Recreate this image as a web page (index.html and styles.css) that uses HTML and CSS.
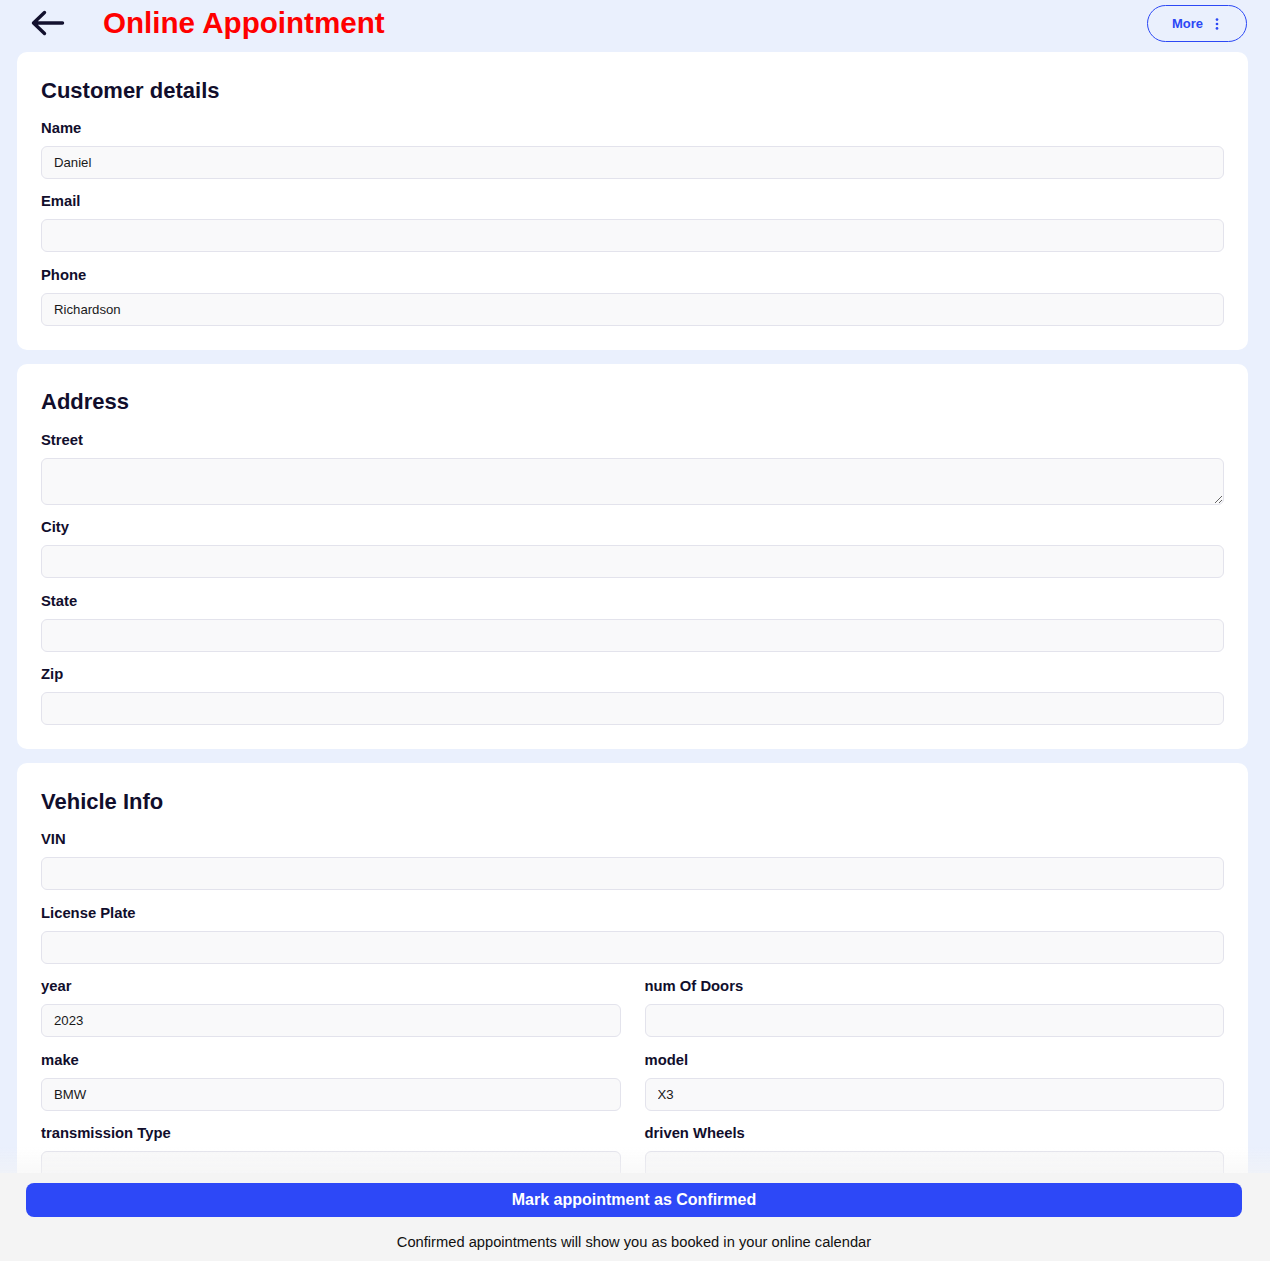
FILE: index.html
```html
<!DOCTYPE html>
<html lang="en">
<head>
<meta charset="utf-8">
<title>Online Appointment</title>
<link rel="stylesheet" href="styles.css">
</head>
<body>
<div class="page">
  <header class="topbar">
    <button class="back" aria-label="Back">
      <svg width="34" height="26" viewBox="0 0 34 26"><path d="M2.5 13 H31.5 M13.5 2.5 L2.5 13 L13.5 23.5" fill="none" stroke="#13112e" stroke-width="3.4" stroke-linecap="round" stroke-linejoin="round"/></svg>
    </button>
    <h1 class="title">Online Appointment</h1>
    <button class="more">More
      <svg width="4" height="12" viewBox="0 0 4 12"><circle cx="2" cy="1.6" r="1.35" fill="#2c48f5"/><circle cx="2" cy="6" r="1.35" fill="#2c48f5"/><circle cx="2" cy="10.4" r="1.35" fill="#2c48f5"/></svg>
    </button>
  </header>

  <main class="content">
    <section class="card">
      <h2 class="card-title">Customer details</h2>
      <div class="field"><label class="label">Name</label><input class="input" value="Daniel"></div>
      <div class="field"><label class="label">Email</label><input class="input" value=""></div>
      <div class="field"><label class="label">Phone</label><input class="input" value="Richardson"></div>
    </section>

    <section class="card">
      <h2 class="card-title">Address</h2>
      <div class="field"><label class="label">Street</label><textarea class="input textarea"></textarea></div>
      <div class="field"><label class="label">City</label><input class="input" value=""></div>
      <div class="field"><label class="label">State</label><input class="input" value=""></div>
      <div class="field"><label class="label">Zip</label><input class="input" value=""></div>
    </section>

    <section class="card">
      <h2 class="card-title">Vehicle Info</h2>
      <div class="field"><label class="label">VIN</label><input class="input" value=""></div>
      <div class="field"><label class="label">License Plate</label><input class="input" value=""></div>
      <div class="grid">
        <div class="field"><label class="label">year</label><input class="input" value="2023"></div>
        <div class="field"><label class="label">num Of Doors</label><input class="input" value=""></div>
        <div class="field"><label class="label">make</label><input class="input" value="BMW"></div>
        <div class="field"><label class="label">model</label><input class="input" value="X3"></div>
        <div class="field"><label class="label">transmission Type</label><input class="input" value=""></div>
        <div class="field"><label class="label">driven Wheels</label><input class="input" value=""></div>
      </div>
    </section>
  </main>

  <footer class="bottombar">
    <button class="confirm">Mark appointment as Confirmed</button>
    <p class="note">Confirmed appointments will show you as booked in your online calendar</p>
  </footer>
</div>
</body>
</html>
```

FILE: styles.css
```css
* { box-sizing: border-box; }

html, body {
  margin: 0;
  padding: 0;
  height: 100%;
  overflow: hidden;
}

body {
  background: #eaf0fd;
  font-family: "Liberation Sans", Arial, Helvetica, sans-serif;
  color: #110e2c;
}

.page {
  height: 100vh;
  overflow: hidden;
}

.topbar {
  height: 52px;
  display: flex;
  align-items: center;
  padding: 0 23px 6px 31px;
}

.back {
  border: 0;
  background: transparent;
  padding: 0;
  width: 34px;
  height: 26px;
  display: flex;
  cursor: pointer;
}

.title {
  margin: 0 0 0 38px;
  font-size: 29.6px;
  font-weight: 700;
  color: #ff0000;
  line-height: normal;
  flex: 1;
}

.more {
  width: 100px;
  height: 37px;
  margin-top: 1px;
  border: 1px solid #2c48f5;
  border-radius: 20px;
  background: transparent;
  color: #2c48f5;
  font-family: "Liberation Sans", Arial, Helvetica, sans-serif;
  font-size: 13px;
  font-weight: 700;
  display: flex;
  align-items: center;
  gap: 12px;
  padding: 0 0 0 24px;
}

.content {
  padding: 0 22px 40px 17px;
  display: flex;
  flex-direction: column;
  gap: 14px;
}

.card {
  background: #ffffff;
  border-radius: 10px;
  padding: 25.5px 24px 24px 24px;
}

.card-title {
  margin: 0 0 16px 0;
  font-size: 22px;
  line-height: 26.4px;
  font-weight: 700;
  color: #110e2c;
}

.field {
  display: flex;
  flex-direction: column;
}

.field + .field { margin-top: 14.5px; }

.label {
  font-size: 14.8px;
  line-height: 17px;
  font-weight: 700;
  color: #110e2c;
  margin-bottom: 9px;
}

.input {
  height: 33px;
  width: 100%;
  border: 1px solid #e3e3ec;
  border-radius: 6px;
  background: #f9f9fa;
  padding: 0 12px;
  font-family: "Liberation Sans", Arial, Helvetica, sans-serif;
  font-size: 13.2px;
  color: #1a1a1a;
  outline: none;
}

.textarea {
  height: 47px;
  resize: vertical;
  padding: 8px 12px;
  display: block;
}

.grid {
  margin-top: 14.5px;
  display: grid;
  grid-template-columns: 1fr 1fr;
  column-gap: 24px;
  row-gap: 14.5px;
}

.grid .field + .field { margin-top: 0; }

.bottombar {
  position: fixed;
  left: 0;
  right: 0;
  bottom: 0;
  height: 88px;
  background: #f4f4f4;
  padding: 10px 28px 0 26px;
  display: flex;
  flex-direction: column;
  align-items: stretch;
}

.bottombar::before {
  content: "";
  position: absolute;
  left: 0;
  right: 0;
  top: -26px;
  height: 26px;
  background: linear-gradient(to bottom, rgba(244,244,244,0), rgba(244,244,244,0.55));
  pointer-events: none;
}

.confirm {
  height: 34px;
  border: 0;
  border-radius: 8px;
  background: #2d48f7;
  color: #ffffff;
  font-family: "Liberation Sans", Arial, Helvetica, sans-serif;
  font-size: 16px;
  font-weight: 700;
}

.note {
  margin: 16.5px 0 0 0;
  text-align: center;
  font-size: 14.7px;
  line-height: 17px;
  color: #111111;
}
```
